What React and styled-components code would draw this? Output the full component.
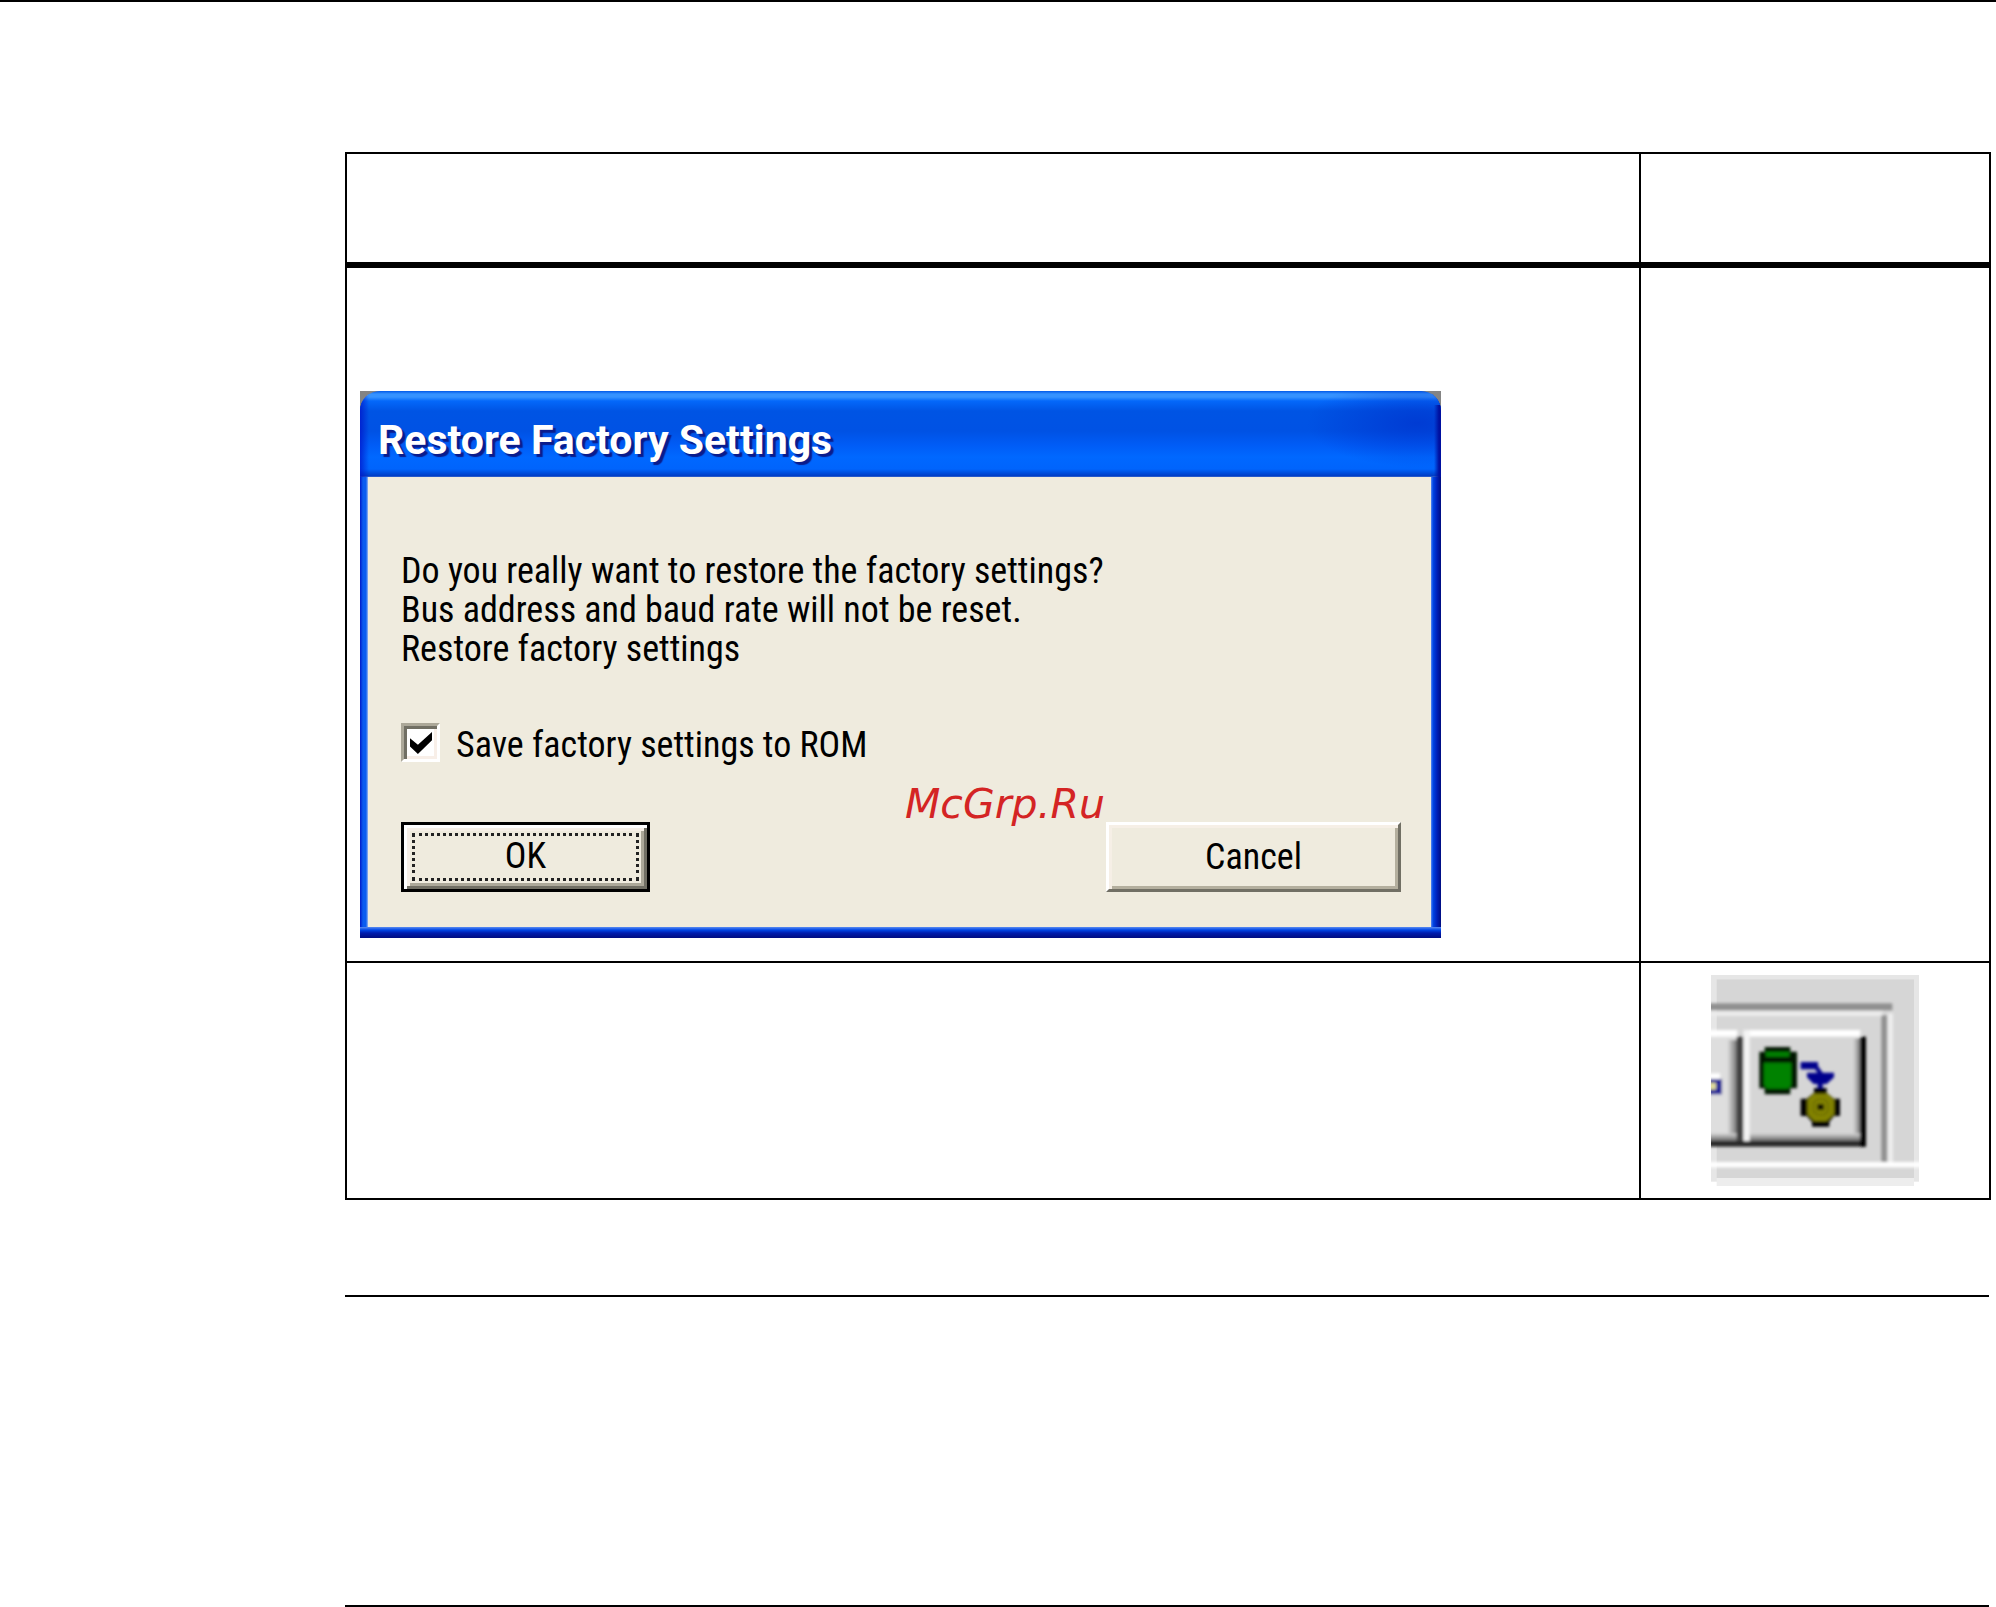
import { useState } from 'react'
import styled, { createGlobalStyle } from 'styled-components'

const App = () => {
  return (
    <>
      <GlobalStyle />
      <Page>
        <StepsTable>
          <colgroup>
            <col />
            <col className="icon-column" />
          </colgroup>
          <thead>
            <tr>
              <HeadCell scope="col" />
              <HeadCell scope="col" />
            </tr>
          </thead>
          <tbody>
            <tr>
              <DialogCell>
                <RestoreDialog />
              </DialogCell>
              <Cell />
            </tr>
            <tr>
              <Cell />
              <Cell>
                <ToolbarDetail />
              </Cell>
            </tr>
          </tbody>
        </StepsTable>
        <Section />
        <Section />
      </Page>
    </>
  )
}

const RestoreDialog = () => {
  const [saveToRom, setSaveToRom] = useState(true)

  return (
    <DialogBackdrop>
      <Dialog role="dialog" aria-labelledby="dialog-title">
        <TitleBar>
          <Title id="dialog-title">Restore Factory Settings</Title>
        </TitleBar>
        <DialogBody>
          <Message>
            Do you really want to restore the factory settings?<br />
            Bus address and baud rate will not be reset.<br />
            Restore factory settings
          </Message>
          <CheckLabel htmlFor="save-to-rom">
            <CheckBox
              id="save-to-rom"
              type="checkbox"
              checked={saveToRom}
              onChange={e => setSaveToRom(e.target.checked)}
            />
            <span>Save factory settings to ROM</span>
          </CheckLabel>
          <Buttons>
            <DefaultButton type="button"><span>OK</span></DefaultButton>
            <Button type="button">Cancel</Button>
          </Buttons>
        </DialogBody>
      </Dialog>
      <Watermark>McGrp.Ru</Watermark>
    </DialogBackdrop>
  )
}

const ToolbarDetail = () => (
  <ToolbarDrawing viewBox="33 45 624 633" role="img" aria-label="Restore factory settings button">
    <defs>
      <filter id="soften" x="-5%" y="-5%" width="110%" height="110%">
        <feGaussianBlur stdDeviation="4" />
      </filter>
      <clipPath id="frame">
        <rect x="33" y="45" width="624" height="636" />
      </clipPath>
      <linearGradient id="shade-right">
        <stop offset="0" stopColor="#d6d6d6" />
        <stop offset="1" stopColor="#707070" />
      </linearGradient>
      <linearGradient id="shade-bottom" x2="0" y2="1">
        <stop offset="0" stopColor="#d6d6d6" />
        <stop offset="1" stopColor="#606060" />
      </linearGradient>
    </defs>
    <rect x="33" y="45" width="624" height="620" fill="#e6e6e6" />
    <rect x="50" y="58" width="592" height="620" fill="#ededed" />
    <rect x="50" y="58" width="592" height="596" fill="#d6d6d6" />
    <g clipPath="url(#frame)">
      <g filter="url(#soften)">
        {/* group frame */}
        <rect x="20" y="130" width="557" height="21" fill="#909090" />
        <rect x="20" y="154" width="527" height="14" fill="#ececec" />
        <rect x="544" y="166" width="18" height="444" fill="#909090" />
        <rect x="563" y="160" width="16" height="450" fill="#ededed" />
        <rect x="20" y="606" width="650" height="16" fill="#fff" />
        {/* neighbouring button */}
        <rect x="20" y="230" width="90" height="310" fill="#dedede" />
        <rect x="84" y="240" width="28" height="300" fill="url(#shade-right)" />
        <rect x="20" y="520" width="92" height="24" fill="url(#shade-bottom)" />
        <rect x="20" y="210" width="92" height="20" fill="#fff" />
        <rect x="110" y="230" width="20" height="328" fill="#404040" />
        {/* restore button */}
        <rect x="460" y="236" width="22" height="306" fill="url(#shade-right)" />
        <rect x="148" y="520" width="332" height="24" fill="url(#shade-bottom)" />
        <rect x="131" y="210" width="350" height="20" fill="#fff" />
        <rect x="131" y="210" width="18" height="336" fill="#f4f4f4" />
        <rect x="20" y="543" width="477" height="17" fill="#262626" />
        <rect x="480" y="230" width="18" height="330" fill="#000" />
        {/* clipped arrow of the neighbour */}
        <rect x="20" y="340" width="40" height="17" fill="#fff" />
        <rect x="20" y="357" width="46" height="46" fill="#1c1c98" />
        <rect x="20" y="368" width="28" height="21" fill="#e0dc9a" />
        {/* database */}
        <path d="M194 261h77v14h20v110h-20v18h-77v-18h-16V275h16z" fill="#001200" />
        <path d="M198 276h70v14h-70zM192 308h82v68l-10 10h-62l-10-10z" fill="#008200" />
        {/* arrow */}
        <path d="M302 306h52v12l14 20h34v14l-22 20h-12v16h-15v-16h-12l-20-20v-14h32l-8-10h-43z" fill="#06068c" />
        {/* disc */}
        <path d="M342 384h38v14l22 18h18v52h-18l-14 18v14h-52v-14l-16-18h-18v-52h18l22-18z" fill="#000" />
        <path d="M341 401h41l20 18v44l-22 20h-38l-20-20v-44z" fill="#828200" />
        <path d="M340 428l12-10h20l12 10v26l-12 10h-20l-12-10z" fill="none" stroke="#6a6a00" strokeWidth="4" />
        <rect x="352" y="432" width="20" height="18" fill="#0a0a00" />
      </g>
    </g>
  </ToolbarDrawing>
)

const GlobalStyle = createGlobalStyle`
  * {
    box-sizing: border-box;
  }

  body {
    margin: 0;
    background: #fff;
    color: #000;
    font-family: "Roboto Condensed", "Liberation Sans", sans-serif;
    font-size: 36px;
    line-height: 39px;
  }
`

const Page = styled.main`
  border-top: 2px solid #000;
  padding: 150px 5px 0 345px;
`

const StepsTable = styled.table`
  width: 100%;
  table-layout: fixed;
  border-collapse: separate;
  border-spacing: 0;
  border-top: 2px solid #000;
  border-left: 2px solid #000;
  margin-bottom: 95px;

  .icon-column {
    width: 350px;
  }
`

const Cell = styled.td`
  padding: 12px;
  border-right: 2px solid #000;
  border-bottom: 2px solid #000;
  vertical-align: top;
`

const HeadCell = styled.th`
  height: 114px;
  padding: 12px;
  border-right: 2px solid #000;
  border-bottom: 6px solid #000;
`

const DialogCell = styled(Cell)`
  padding: 123px 13px 23px;
`

const ToolbarDrawing = styled.svg`
  display: block;
  width: 208px;
  height: 211px;
  margin: 0 auto;
`

const DialogBackdrop = styled.div`
  position: relative;
  max-width: 1081px;
  background: #848484;
`

const Dialog = styled.div`
  padding: 0 10px 11px 8px;
  border-radius: 20px 20px 0 0;
  background:
    linear-gradient(to bottom, #5b8cf0, #0046e6 3px, #001cae 6px, #000c80) bottom / 100% 11px no-repeat,
    linear-gradient(to right, #0018c8, #0a5cf0 3px, #0a5cf0 6px, #9bb8ee) left / 8px 100% no-repeat,
    linear-gradient(to right, #5b8cf0, #0046e6 2px, #0020b8 6px, #000c80) right / 10px 100% no-repeat;
  overflow: hidden;
`

const TitleBar = styled.header`
  display: flex;
  align-items: center;
  height: 86px;
  margin: 0 -10px 0 -8px;
  padding: 12px 18px 0;
  background:
    linear-gradient(to right, transparent calc(100% - 7px), #0010a0 calc(100% - 2px)) 0 14px no-repeat,
    linear-gradient(to right, rgba(0, 16, 200, 0.7), transparent 9px),
    radial-gradient(ellipse 110px 44px at calc(100% - 24px) 32px, rgba(0, 44, 200, 0.6), transparent),
    linear-gradient(
      to bottom,
      #0058e8 0,
      #3592ff 3px,
      #3592ff 6px,
      #0468fa 10px,
      #0054e4 20px,
      #0052e4 40px,
      #005cf6 54px,
      #0068ff 66px,
      #0064fc 78px,
      #003cc4 85px,
      #4a74d0 86px
    );
`

const Title = styled.h1`
  margin: 0;
  color: #fff;
  font-family: Roboto, "Liberation Sans", sans-serif;
  font-size: 41px;
  font-weight: 700;
  line-height: 46px;
  text-shadow: 3px 3px 1px #0a1c8c;
`

const DialogBody = styled.div`
  padding: 75px 30px 35px 33px;
  background: #efebde;
`

const Message = styled.p`
  margin: 0 0 54px;
`

const CheckLabel = styled.label`
  display: flex;
  align-items: center;
  gap: 16px;
  width: fit-content;

  span {
    padding-top: 3px;
    margin-bottom: -3px;
  }
`

const CheckBox = styled.input`
  appearance: none;
  width: 39px;
  height: 39px;
  margin: 0;
  border: 3px solid;
  border-color: #aca899 #fff #fff #aca899;
  background: #fff;
  box-shadow: inset 3px 3px 0 #716f64, inset -3px -3px 0 #f8efe8;

  &:checked::before {
    content: '';
    display: block;
    width: 22px;
    height: 22px;
    margin: 6px;
    background: #000;
    clip-path: polygon(0 28%, 36% 58%, 100% 0, 100% 38%, 36% 100%, 0 66%);
  }
`

const Buttons = styled.div`
  display: flex;
  justify-content: space-between;
  margin-top: 60px;
`

const Button = styled.button`
  width: 295px;
  height: 70px;
  padding: 0;
  border: 3px solid;
  border-color: #fff #716f64 #716f64 #fff;
  background: #efebde;
  box-shadow: inset 3px 3px 0 #f6efe6, inset -3px -3px 0 #b4af9e;
  color: #000;
  font: inherit;
`

const DefaultButton = styled(Button)`
  width: 249px;
  padding: 8px;
  border-color: #000;
  box-shadow:
    inset 3px 3px 0 #fff,
    inset -3px -3px 0 #716f64,
    inset 6px 6px 0 #f6efe6,
    inset -6px -6px 0 #aca899;

  span {
    display: block;
    height: 100%;
    border: 3px dotted #222;
    line-height: 40px;
  }
`

const Watermark = styled.span`
  position: absolute;
  top: 393px;
  left: 545px;
  color: #d42424;
  font-family: "DejaVu Sans", sans-serif;
  font-size: 41px;
  font-style: italic;
  line-height: 41px;
`

const Section = styled.section`
  height: 310px;
  margin-right: 2px;
  border-top: 2px solid #000;

  &:last-child {
    height: 2px;
  }
`

export default App
